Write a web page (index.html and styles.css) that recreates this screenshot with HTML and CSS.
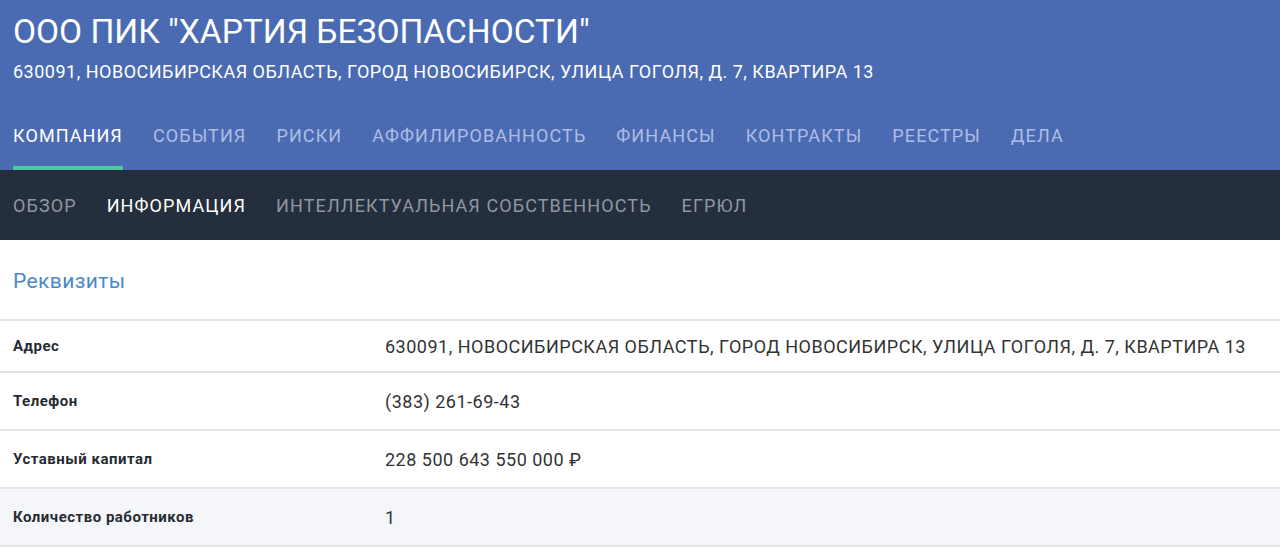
FILE: index.html
```html
<!DOCTYPE html>
<html lang="ru">
<head>
    <meta charset="UTF-8">
    <title>ООО ПИК "ХАРТИЯ БЕЗОПАСНОСТИ"</title>
    <link rel="stylesheet" href="styles.css">
</head>
<body>
    <div class="header">
        <h1 class="title">ООО ПИК "ХАРТИЯ БЕЗОПАСНОСТИ"</h1>
        <div class="address">630091, НОВОСИБИРСКАЯ ОБЛАСТЬ, ГОРОД НОВОСИБИРСК, УЛИЦА ГОГОЛЯ, Д. 7, КВАРТИРА 13</div>
        <div class="tabs">
            <a class="tab active">КОМПАНИЯ</a>
            <a class="tab">СОБЫТИЯ</a>
            <a class="tab">РИСКИ</a>
            <a class="tab">АФФИЛИРОВАННОСТЬ</a>
            <a class="tab">ФИНАНСЫ</a>
            <a class="tab">КОНТРАКТЫ</a>
            <a class="tab">РЕЕСТРЫ</a>
            <a class="tab">ДЕЛА</a>
        </div>
    </div>
    <div class="subnav">
        <a class="subtab">ОБЗОР</a>
        <a class="subtab active">ИНФОРМАЦИЯ</a>
        <a class="subtab">ИНТЕЛЛЕКТУАЛЬНАЯ СОБСТВЕННОСТЬ</a>
        <a class="subtab">ЕГРЮЛ</a>
    </div>
    <div class="content">
        <h2 class="section-title">Реквизиты</h2>
        <table class="details">
            <tr class="first">
                <th>Адрес</th>
                <td>630091, НОВОСИБИРСКАЯ ОБЛАСТЬ, ГОРОД НОВОСИБИРСК, УЛИЦА ГОГОЛЯ, Д. 7, КВАРТИРА 13</td>
            </tr>
            <tr>
                <th>Телефон</th>
                <td>(383) 261-69-43</td>
            </tr>
            <tr>
                <th>Уставный капитал</th>
                <td>228 500 643 550 000 ₽</td>
            </tr>
            <tr class="hover">
                <th>Количество работников</th>
                <td>1</td>
            </tr>
        </table>
    </div>
</body>
</html>
```

FILE: styles.css
```css
body {
    margin: 0;
    font-family: Roboto, "Liberation Sans", sans-serif;
    color: #333;
    background: #fff;
}
.header {
    background-color: #4a6bb2;
    color: #fff;
    padding: 0 13px;
}
.title {
    margin: 0;
    padding-top: 12px;
    font-size: 33.5px;
    font-weight: 400;
    line-height: 40px;
}
.address {
    margin-top: 9px;
    font-size: 18px;
    letter-spacing: 0.5px;
    line-height: 22px;
}
.tabs {
    display: flex;
    gap: 30px;
    margin-top: 36px;
}
.tab {
    font-size: 18px;
    letter-spacing: 1.1px;
    color: #aebde6;
    padding: 6px 0 20px;
    border-bottom: 4px solid transparent;
}
.tab.active {
    color: #fff;
    border-bottom-color: #4fc7a2;
}
.subnav {
    background-color: #242e3c;
    height: 70px;
    display: flex;
    align-items: center;
    gap: 30px;
    padding: 0 13px;
}
.subtab {
    font-size: 18px;
    letter-spacing: 1.1px;
    color: #8f97a3;
}
.subtab.active {
    color: #fff;
}
.content {
    padding-top: 29px;
}
.section-title {
    margin: 0 13px 26px;
    font-size: 21px;
    letter-spacing: 0.4px;
    font-weight: 400;
    color: #4a88c9;
}
.details {
    width: 100%;
    border-collapse: collapse;
    border-top: 2px solid #e3e5e8;
}
.details th, .details td {
    border-bottom: 2px solid #e3e5e8;
    text-align: left;
    height: 56px;
    padding: 0 13px;
}
.details tr.first th, .details tr.first td {
    height: 50px;
}
.details th {
    width: 346px;
    font-size: 15px;
    letter-spacing: 0.5px;
    font-weight: 700;
    color: #262b33;
}
.details td {
    font-size: 18px;
    letter-spacing: 0.5px;
    color: #333;
}
.details tr.hover {
    background-color: #f4f6f9;
}
```
